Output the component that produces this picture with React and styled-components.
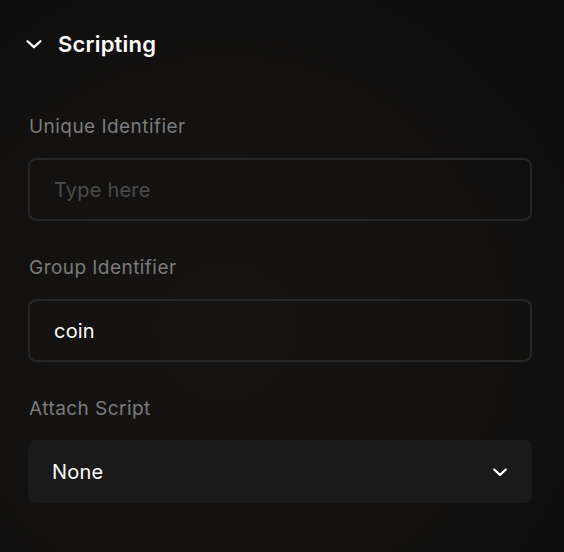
import React from "react";
import styled, { createGlobalStyle } from "styled-components";

const GlobalStyle = createGlobalStyle`
  html, body {
    margin: 0;
    padding: 0;
    background: #111010;
  }
  body {
    font-family: Inter, "Noto Sans", sans-serif;
    -webkit-font-smoothing: antialiased;
  }
`;

const Panel = styled.div`
  width: 564px;
  height: 552px;
  box-sizing: border-box;
  padding: 28px 32px 0 28px;
  background: radial-gradient(ellipse at 40% 60%, #161514 0%, #121110 55%, #0e0d0d 100%);
  display: flex;
  flex-direction: column;
`;

const Header = styled.div`
  display: flex;
  align-items: center;
  gap: 13px;
  height: 32px;
  margin-left: -5px;
  color: #ffffff;
`;

const Title = styled.h2`
  margin: 0;
  font-size: 22px;
  font-weight: 600;
  letter-spacing: 0.2px;
`;

const Fields = styled.div`
  display: flex;
  flex-direction: column;
  gap: 36px;
  margin-top: 56px;
`;

const Field = styled.div`
  display: flex;
  flex-direction: column;
  gap: 20px;
`;

const Label = styled.label`
  font-size: 19px;
  line-height: 22px;
  letter-spacing: 0.45px;
  color: #7b7b7b;
  margin-left: 1px;
`;

const Input = styled.input`
  box-sizing: border-box;
  width: 100%;
  height: 63px;
  padding: 0 24px;
  border: 2px solid #262626;
  border-radius: 8px;
  background: transparent;
  color: #ffffff;
  font-family: inherit;
  font-size: 20px;
  letter-spacing: 0.2px;
  outline: none;
  &::placeholder {
    color: #4b4b4b;
  }
`;

const Select = styled.button`
  box-sizing: border-box;
  width: 100%;
  height: 63px;
  padding: 0 22px 0 24px;
  border: none;
  border-radius: 8px;
  background: #1b1a1a;
  color: #ffffff;
  font-family: inherit;
  font-size: 20px;
  letter-spacing: 0.2px;
  display: flex;
  align-items: center;
  justify-content: space-between;
`;

const Chevron = ({ size = 18 }) => (
  <svg width={size} height={size} viewBox="0 0 24 24" fill="none">
    <path d="M5 9l7 6.5L19 9" stroke="#ffffff" strokeWidth="2.6" strokeLinecap="round" strokeLinejoin="round" />
  </svg>
);

export default function App() {
  return (
    <>
      <GlobalStyle />
      <Panel>
        <Header>
          <Chevron size={22} />
          <Title>Scripting</Title>
        </Header>
        <Fields>
          <Field>
            <Label>Unique Identifier</Label>
            <Input placeholder="Type here" />
          </Field>
          <Field>
            <Label>Group Identifier</Label>
            <Input defaultValue="coin" />
          </Field>
          <Field>
            <Label>Attach Script</Label>
            <Select>
              None
              <Chevron size={20} />
            </Select>
          </Field>
        </Fields>
      </Panel>
    </>
  );
}
